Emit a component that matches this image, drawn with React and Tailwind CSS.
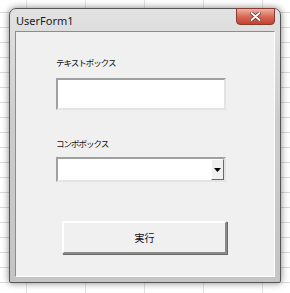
import React from 'react'

const jp = { fontFamily: '"MS UI Gothic", "Noto Sans CJK JP", sans-serif' }

// Excel のシート上に表示された UserForm1 ダイアログ
export default function App() {
  return (
    <div className="relative h-[293px] w-[290px] overflow-hidden bg-white bg-[linear-gradient(#dadada_1px,transparent_1px),linear-gradient(90deg,#e2e2e2_1px,transparent_1px)] bg-[size:59px_15px] bg-[position:26px_12px]">
      {/* ウィンドウ枠 */}
      <div className="absolute left-[9px] top-[8px] flex h-[275px] w-[272px] flex-col rounded-t-[7px] rounded-b-[2px] border border-[#555] bg-[linear-gradient(#e2e2e2,#cdcdcd_40%,#c4c4c4)] shadow-[0_0_7px_rgba(0,0,0,0.5)]">
        {/* タイトルバー */}
        <div className="relative flex h-[22px] shrink-0 items-center pl-[6px] pt-[1px]">
          <span className="text-[11px] leading-none text-[#1b1b1b]" style={{ fontFamily: '"Noto Sans", sans-serif' }}>
            UserForm1
          </span>
          <div className="absolute right-[5px] top-[-1px] flex h-[17px] w-[39px] items-center justify-center rounded-b-[4px] border border-[#8a3a30] bg-[linear-gradient(#eeb2a4,#d86a56_50%,#c2422e)]">
            <svg width="11" height="9" viewBox="0 0 11 9">
              <path d="M1.5 1 L9.5 8 M9.5 1 L1.5 8" stroke="#6a2a20" strokeWidth="3.4" strokeLinecap="round" />
              <path d="M1.5 1 L9.5 8 M9.5 1 L1.5 8" stroke="#ffffff" strokeWidth="1.9" strokeLinecap="round" />
            </svg>
          </div>
        </div>

        {/* クライアント領域 */}
        <div className="mx-[5px] mb-[5px] flex flex-1 flex-col border border-t-[#8c8c8c] border-l-[#8c8c8c] border-r-white border-b-white bg-[#f0f0f0] pl-[40px]" style={jp}>
          <div className="mt-[25px] h-[10px] text-[8.5px] leading-[10px] tracking-[-1px] text-[#111]">テキストボックス</div>
          <div className="mt-[11px] h-[32px] w-[170px] border-2 border-t-[#a0a0a0] border-l-[#a0a0a0] border-r-[#e4e4e4] border-b-[#e4e4e4] bg-white" />

          <div className="mt-[28px] h-[10px] text-[8.5px] leading-[10px] tracking-[-1px] text-[#111]">コンボボックス</div>
          <div className="mt-[9px] flex h-[25px] w-[170px] border-2 border-t-[#a0a0a0] border-l-[#a0a0a0] border-r-[#e4e4e4] border-b-[#e4e4e4] bg-white">
            <div className="flex-1" />
            <div className="flex w-[13px] items-center justify-center border border-t-white border-l-white border-r-[#696969] border-b-[#696969] bg-[#f0f0f0]">
              <svg width="7" height="4" viewBox="0 0 7 4">
                <path d="M0 0 H7 L3.5 4 Z" fill="#000" />
              </svg>
            </div>
          </div>

          <div className="ml-[6px] mt-[39px] flex h-[33px] w-[165px] items-center justify-center border-2 border-t-white border-l-white border-r-[#8a8a8a] border-b-[#8a8a8a] bg-[#f0f0f0] shadow-[1px_1px_0_#696969]">
            <span className="text-[10px] leading-none text-[#111]">実行</span>
          </div>
        </div>
      </div>
    </div>
  )
}
